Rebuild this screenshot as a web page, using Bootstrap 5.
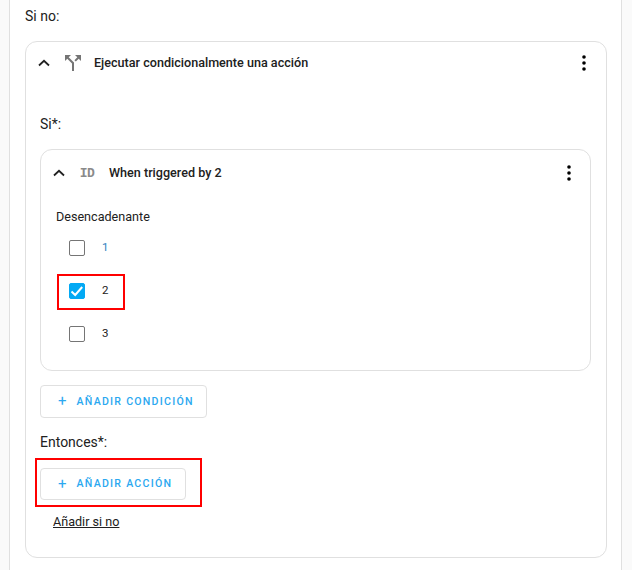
<!DOCTYPE html>
<html lang="es">
<head>
  <meta charset="UTF-8">
  <meta name="viewport" content="width=device-width, initial-scale=1">
  <title>Si no</title>
  <link href="https://cdn.jsdelivr.net/npm/bootstrap@5.3.3/dist/css/bootstrap.min.css" rel="stylesheet">
  <style>
    html, body { height: 570px; overflow: hidden; }
    body { background: #fafafa; font-family: Roboto, "Liberation Sans", sans-serif; font-size: 14px; color: #212121; }
    .panel-main { margin: 0 10px 0 9px; width: 613px; height: 570px; background: #fff; border-left: 1px solid #e0e0e0; border-right: 1px solid #e0e0e0; padding: 6px 14px 0 15px; position: relative; }
    .field-label { line-height: 20px; }
    .block-outer, .block-inner { border: 1px solid #e0e0e0; border-radius: 12px; }
    .block-outer { margin-top: 15px; width: 582px; height: 517px; padding: 0 14px; }
    .block-inner { margin-top: 15px; width: 551px; height: 222px; padding: 0 15px; }
    .block-head { height: 46px; font-weight: 500; font-size: 12.6px; margin-left: -3px; }
    .block-outer > .block-head { height: 42px; margin-left: -2px; }
    .icon-chevron { width: 12px; height: 8px; flex: none; }
    .icon-split { width: 24px; height: 24px; flex: none; color: #757575; margin-left: 11px; }
    .icon-id { width: 18px; flex: none; font-family: "Liberation Mono", monospace; font-weight: 700; font-size: 13px; line-height: 16px; padding-top: 2px; color: #8a8a8a; text-align: center; letter-spacing: -.5px; margin-left: 13px; }
    .icon-dots { width: 4px; height: 16px; flex: none; margin-right: 6px; }
    .block-inner .icon-dots { margin-right: 4px; }
    .check-row { height: 43px; padding-left: 13px; font-size: 11.5px; }
    .check-box { width: 16px; height: 16px; border: 1px solid #757575; border-radius: 2px; flex: none; }
    .check-box.is-on { background: #03a9f4; border-color: #03a9f4; }
    .check-text { margin-left: 17px; }
    .add-btn { border: 1px solid #e0e0e0; border-radius: 4px; background: #fff; color: #2ba8f0; font-size: 10.6px; font-weight: 500; letter-spacing: 1.25px; padding: 0 0 0 17px; gap: 10px; }
    .add-plus { font-size: 15px; font-weight: 400; letter-spacing: 0; }
    .add-cond { width: 167px; height: 33px; margin-top: 14px; }
    .add-acc { width: 146px; height: 32px; margin-top: 16px; }
    .link-else { color: #212121; font-size: 12.6px; text-decoration: underline; margin: 13px 0 0 13px; }
    .red-mark { position: absolute; border: 2px solid #f00; pointer-events: none; }
    .mark-check { left: 47px; top: 274px; width: 68px; height: 36px; }
    .mark-action { left: 25px; top: 458px; width: 167px; height: 49px; }
  </style>
</head>
<body>
  <div class="panel-main">
    <div class="field-label">Si no:</div>

    <div class="block-outer">
      <div class="block-head d-flex align-items-center">
        <svg class="icon-chevron" viewBox="0 0 12 8"><path d="M1 6.5 6 1.8l5 4.7" fill="none" stroke="#212121" stroke-width="1.8"/></svg>
        <svg class="icon-split" viewBox="0 0 24 24"><path fill="currentColor" d="M14 4l2.29 2.29-2.88 2.88 1.42 1.42 2.88-2.88L20 10V4M10 4H4v6l2.29-2.29L11 12.41V20h2v-8.41L7.71 6.29"/></svg>
        <span style="margin-left:9px">Ejecutar condicionalmente una acción</span>
        <svg class="icon-dots ms-auto" viewBox="0 0 4 16"><circle cx="2" cy="2" r="1.8"/><circle cx="2" cy="8" r="1.8"/><circle cx="2" cy="14" r="1.8"/></svg>
      </div>

      <div class="field-label" style="margin-top:30px">Si*:</div>

      <div class="block-inner">
        <div class="block-head d-flex align-items-center">
          <svg class="icon-chevron" viewBox="0 0 12 8"><path d="M1 6.5 6 1.8l5 4.7" fill="none" stroke="#212121" stroke-width="1.8"/></svg>
          <span class="icon-id">ID</span>
          <span style="margin-left:13px">When triggered by 2</span>
          <svg class="icon-dots ms-auto" viewBox="0 0 4 16"><circle cx="2" cy="2" r="1.8"/><circle cx="2" cy="8" r="1.8"/><circle cx="2" cy="14" r="1.8"/></svg>
        </div>
        <div style="font-size:12.6px;line-height:18px;margin-top:12px">Desencadenante</div>
        <div class="check-row d-flex align-items-center">
          <span class="check-box"></span><span class="check-text" style="color:#2b7fc0">1</span>
        </div>
        <div class="check-row d-flex align-items-center">
          <span class="check-box is-on d-flex align-items-center justify-content-center">
            <svg width="14" height="14" viewBox="0 0 14 14"><path d="M1.5 7.5 5.2 11l7-8" fill="none" stroke="#fff" stroke-width="2"/></svg>
          </span><span class="check-text">2</span>
        </div>
        <div class="check-row d-flex align-items-center">
          <span class="check-box"></span><span class="check-text">3</span>
        </div>
      </div>

      <button type="button" class="add-btn add-cond btn d-flex align-items-center">
        <span class="add-plus">+</span> AÑADIR CONDICIÓN
      </button>
      <div class="field-label" style="margin-top:14px">Entonces*:</div>
      <button type="button" class="add-btn add-acc btn d-flex align-items-center">
        <span class="add-plus">+</span> AÑADIR ACCIÓN
      </button>
      <a href="#" class="link-else d-inline-block">Añadir si no</a>
    </div>

    <div class="red-mark mark-check"></div>
    <div class="red-mark mark-action"></div>
  </div>
</body>
</html>
